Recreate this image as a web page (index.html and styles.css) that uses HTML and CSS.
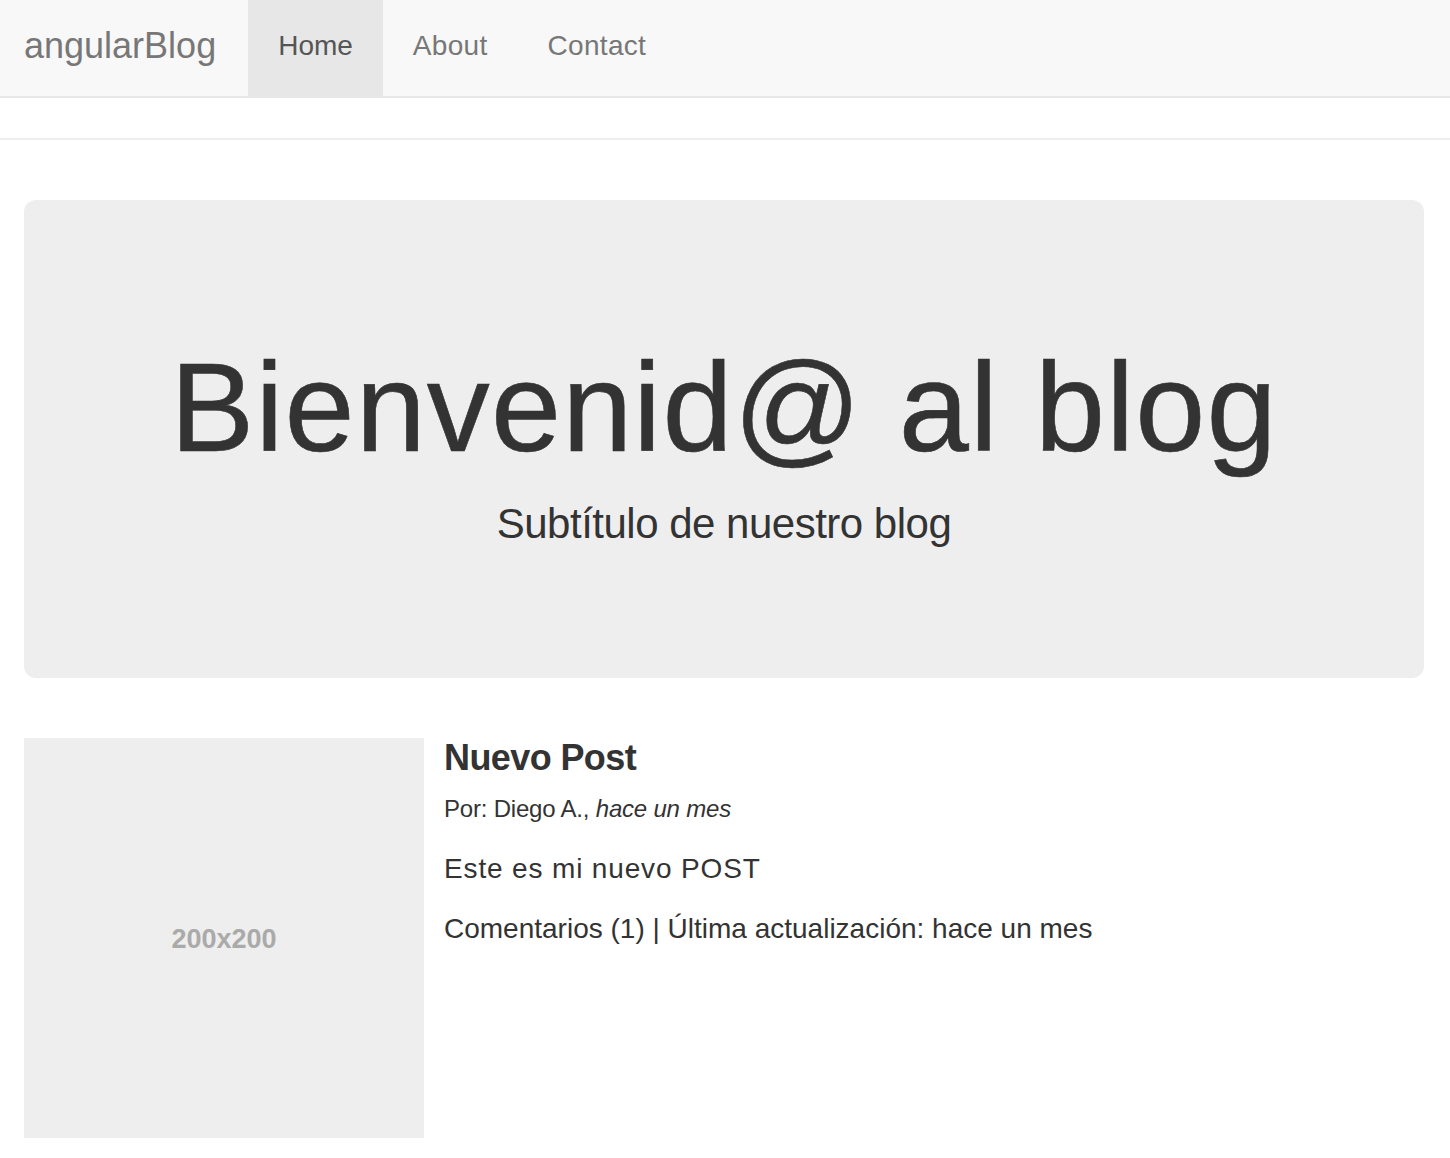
FILE: index.html
```html
<!DOCTYPE html>
<html lang="es">
<head>
<meta charset="utf-8">
<title>angularBlog</title>
<link rel="stylesheet" href="styles.css">
</head>
<body>
<nav class="navbar">
  <a class="brand" href="#">angularBlog</a>
  <ul class="nav">
    <li class="active"><a href="#">Home</a></li>
    <li><a href="#">About</a></li>
    <li><a href="#">Contact</a></li>
  </ul>
</nav>
<hr class="rule">
<main class="container">
  <section class="jumbotron">
    <h1>Bienvenid@ al blog</h1>
    <p>Subtítulo de nuestro blog</p>
  </section>
  <article class="media">
    <div class="thumb"><span>200x200</span></div>
    <div class="media-body">
      <h4 class="media-heading">Nuevo Post</h4>
      <p><small>Por: Diego A., <em>hace un mes</em></small></p>
      <p class="lead-line">Este es mi nuevo POST</p>
      <p>Comentarios (1) | Última actualización: hace un mes</p>
    </div>
  </article>
</main>
</body>
</html>
```
FILE: styles.css
```css
* { box-sizing: border-box; }
html, body { margin: 0; padding: 0; }
body {
  font-family: "Liberation Sans", Arial, sans-serif;
  font-size: 28px;
  line-height: 40px;
  color: #333;
  background: #fff;
}
a { text-decoration: none; }

.navbar {
  display: flex;
  align-items: stretch;
  height: 98px;
  background: #f8f8f8;
  border-bottom: 2px solid #e7e7e7;
}
.brand {
  display: block;
  padding: 26px 32px 30px 24px;
  font-size: 36px;
  line-height: 40px;
  color: #777;
}
.nav {
  display: flex;
  list-style: none;
  margin: 0;
  padding: 0;
}
.nav li a {
  display: block;
  height: 96px;
  padding: 26px 30px 30px;
  font-size: 28px;
  line-height: 40px;
  color: #777;
  letter-spacing: 0.3px;
}
.nav li.active a {
  background: #e7e7e7;
  color: #555;
  letter-spacing: 0;
}

.rule {
  margin: 40px 0 60px;
  border: 0;
  border-top: 2px solid #eee;
  height: 0;
}

.container {
  padding: 0 26px 0 24px;
}

.jumbotron {
  background: #eee;
  border-radius: 12px;
  padding: 139px 20px 124px;
  text-align: center;
}
.jumbotron h1 {
  margin: 0;
  font-size: 126px;
  line-height: 138px;
  font-weight: 500;
  color: #333;
  letter-spacing: 1.1px;
  -webkit-text-stroke: 0.6px #333;
}
.jumbotron p {
  margin: 17px 0 0;
  font-size: 42px;
  line-height: 60px;
  font-weight: 300;
  letter-spacing: -0.5px;
  color: #333;
}

.media {
  display: flex;
  margin-top: 60px;
}
.thumb {
  flex: 0 0 400px;
  height: 400px;
  background: #eee;
  display: flex;
  align-items: center;
  justify-content: center;
  margin-right: 20px;
}
.thumb span {
  font-size: 27px;
  font-weight: bold;
  color: #aaa;
  line-height: 1;
  margin-top: 2px;
}
.media-body {
  flex: 1;
}
.media-heading {
  margin: 0 0 10px;
  font-size: 36px;
  line-height: 39.6px;
  font-weight: bold;
  letter-spacing: -0.6px;
}
.media-body p {
  margin: 0 0 20px;
}
.media-body small {
  font-size: 24px;
  letter-spacing: -0.2px;
}
.media-body .lead-line {
  letter-spacing: 0.85px;
}
```
